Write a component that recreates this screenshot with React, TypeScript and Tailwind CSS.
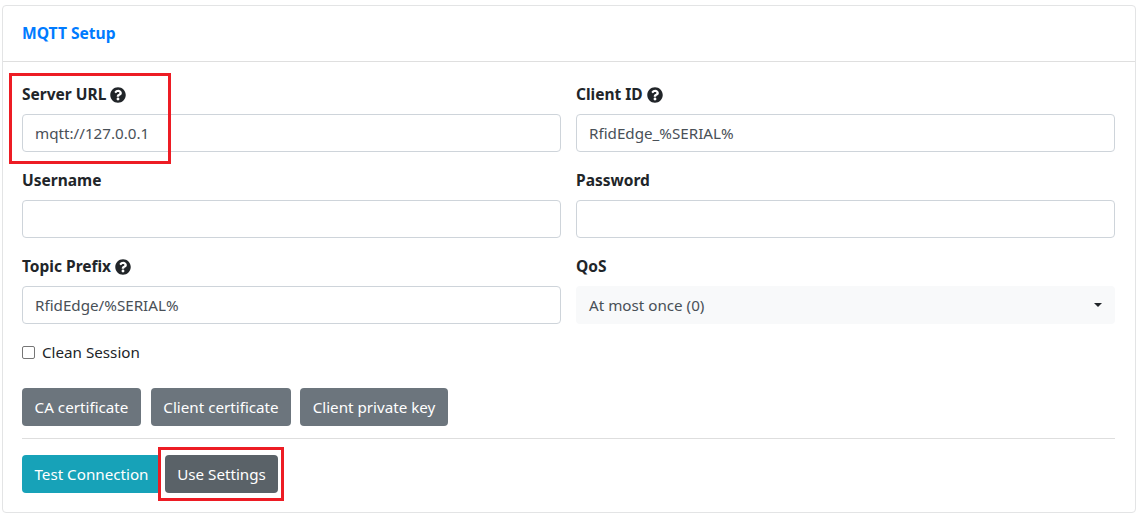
import { FaQuestionCircle } from "react-icons/fa";

function Field({ label, help, value, select }: { label: string; help?: boolean; value?: string; select?: boolean }) {
  return (
    <div className="flex flex-col">
      <label className="mb-2 flex h-6 items-center gap-[3px] pt-[2px] text-[15.5px] font-bold text-[#212529]">
        {label}
        {help && <FaQuestionCircle className="ml-[1px] h-4 w-4" />}
      </label>
      {select ? (
        <div className="flex h-[38px] items-center justify-between rounded bg-[#f8f9fa] pl-[13px] pr-[13px] text-[#495057]">
          <span>{value}</span>
          <span className="h-0 w-0 border-x-[4px] border-t-[4px] border-x-transparent border-t-[#212529]" />
        </div>
      ) : (
        <div className="flex h-[38px] items-center rounded border border-[#ced4da] bg-white px-[12px] text-[#495057]">
          {value}
        </div>
      )}
    </div>
  );
}

function Btn({ children, className }: { children: React.ReactNode; className: string }) {
  return (
    <button className={"flex h-[38px] items-center justify-center rounded text-white " + className}>{children}</button>
  );
}

export default function App() {
  return (
    <div className="relative h-[514px] w-[1137px] overflow-hidden bg-white pl-[2px] pt-[5px] font-['Noto_Sans',sans-serif] text-[15.2px] text-[#212529]">
      <div className="h-[508px] w-[1134px] rounded border border-[#e3e4e5]">
        <div className="flex h-[56px] items-center border-b border-[#dfdfdf] px-[19px]">
          <span className="text-[15.6px] font-bold text-[#007bff]">MQTT Setup</span>
        </div>
        <div className="px-[19px] pt-[20px]">
          <div className="grid w-[1093px] grid-cols-2 gap-x-[15px] gap-y-4">
            <Field label="Server URL" help value="mqtt://127.0.0.1" />
            <Field label="Client ID" help value="RfidEdge_%SERIAL%" />
            <Field label="Username" />
            <Field label="Password" />
            <Field label="Topic Prefix" help value="RfidEdge/%SERIAL%" />
            <Field label="QoS" select value="At most once (0)" />
          </div>
          <div className="mt-4 flex h-6 items-center gap-[7px]">
            <span className="h-[13px] w-[13px] rounded-[2px] border border-[#767676] bg-white" />
            <span>Clean Session</span>
          </div>
          <div className="mt-6 flex">
            <Btn className="w-[119px] bg-[#6c757d]">CA certificate</Btn>
            <Btn className="ml-[10px] w-[140px] bg-[#6c757d]">Client certificate</Btn>
            <Btn className="ml-[9px] w-[148px] bg-[#6c757d]">Client private key</Btn>
          </div>
          <hr className="mt-3 w-[1093px] border-t border-[#dedede]" />
          <div className="mt-4 flex">
            <Btn className="w-[139px] bg-[#17a2b8]">Test Connection</Btn>
            <Btn className="ml-[4px] w-[113px] bg-[#5a6268]">Use Settings</Btn>
          </div>
        </div>
      </div>
      {/* red annotation boxes drawn over the form */}
      <div className="absolute left-[9px] top-[73px] h-[91px] w-[162px] border-[3px] border-[#ed1c24]" />
      <div className="absolute left-[158px] top-[447px] h-[54px] w-[126px] border-[3px] border-[#ed1c24]" />
    </div>
  );
}
